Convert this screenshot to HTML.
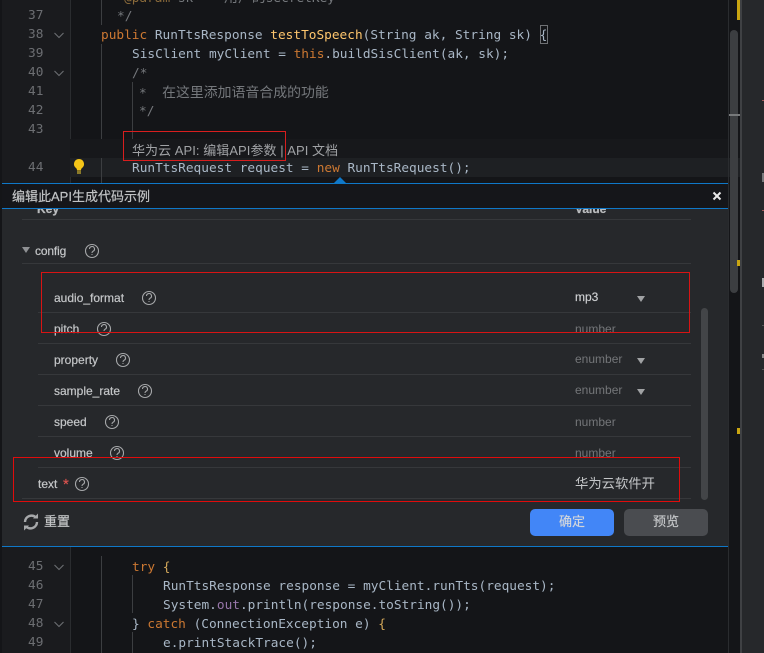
<!DOCTYPE html>
<html><head><meta charset="utf-8">
<style>
html,body{margin:0;padding:0;background:#141518;}
#r{position:relative;width:764px;height:653px;overflow:hidden;background:#141518;}
#r div,#r svg{position:absolute;}
.c{font:12.79px/19px "DejaVu Sans Mono","Noto Sans CJK SC",monospace;color:#a9b7c6;white-space:pre;margin-top:1px;}
.c i{font:13.9px/19px "Noto Sans CJK SC",sans-serif;}
.n{font:12.79px/19px "DejaVu Sans Mono",monospace;color:#6c6e72;white-space:pre;left:28px;}
.k{color:#cc7832}.f{color:#ffc66d}.g{color:#75787c}.w{color:#bfc3c8}.p{color:#9876aa}.y{color:#d4a85a}
.t{font:12px/16px "Liberation Sans","Noto Sans CJK SC",sans-serif;color:#c4c6c8;white-space:pre;-webkit-text-stroke:.2px #c4c6c8;}
.v{font:12px/16px "Liberation Sans","Noto Sans CJK SC",sans-serif;color:#747679;white-space:pre;left:575px;}
.h{height:1px;background:#36383b;}
.ig{width:1px;background:#3c3e41;}
.cj{-webkit-text-stroke:0;}
</style></head><body>
<div id="r">
<div style="left:0;top:0;width:70px;height:653px;background:#1a1b1e"></div>
<div style="left:70px;top:0;width:659px;height:653px;background:#141518"></div>
<div style="left:70px;top:0;width:1px;height:653px;background:#2a2c2f"></div>
<div style="left:70px;top:158px;width:670px;height:19px;background:#1e2023"></div>
<div style="left:0;top:0;width:2px;height:653px;background:#141518"></div>

<div class="ig" style="left:101px;top:0;height:25px"></div>
<div class="ig" style="left:101px;top:44px;height:95px"></div>
<div class="ig" style="left:101px;top:158px;height:25px"></div>
<div class="ig" style="left:132px;top:82px;height:57px"></div>
<div class="ig" style="left:101px;top:556px;height:97px"></div>
<div class="ig" style="left:132px;top:575px;height:38px"></div>
<div class="ig" style="left:132px;top:632px;height:21px"></div>

<div class="c g" style="left:124px;top:-13px"><span style="color:#8a6a3a">@param</span> sk    <i>用户的</i>secretKey</div>
<div class="c g" style="left:117px;top:6px">*/</div>
<div class="n" style="top:6px">37</div>
<div class="n" style="top:25px">38</div>
<div class="n" style="top:44px">39</div>
<div class="n" style="top:63px">40</div>
<div class="n" style="top:82px">41</div>
<div class="n" style="top:101px">42</div>
<div class="n" style="top:120px">43</div>
<div class="n" style="top:158px">44</div>
<div class="n" style="top:557px">45</div>
<div class="n" style="top:576px">46</div>
<div class="n" style="top:595px">47</div>
<div class="n" style="top:614px">48</div>
<div class="n" style="top:633px">49</div>

<svg style="left:52px;top:0;width:16px;height:653px" viewBox="0 0 16 653" fill="none" stroke="#6c6e72" stroke-width="1.1">
<path d="M2.500 33l4.500 4.500 4.500-4.500M2.500 71l4.500 4.500 4.500-4.500M2.500 565l4.500 4.500 4.500-4.500M2.500 622l4.500 4.500 4.500-4.500"/>
</svg>

<div class="c" style="left:101px;top:25px"><span class="k">public</span> RunTtsResponse <span class="f">testToSpeech</span>(String ak, String sk) {</div>
<div style="left:540px;top:25px;width:6px;height:17px;border:1px solid #6f7174"></div>
<div class="c" style="left:132px;top:44px">SisClient myClient = <span class="k">this</span>.buildSisClient(ak, sk);</div>
<div class="c g" style="left:132px;top:63px">/*</div>
<div class="c g" style="left:139px;top:82px">*  <i>在这里添加语音合成的功能</i></div>
<div class="c g" style="left:139px;top:101px">*/</div>
<div style="left:70px;top:139px;width:659px;height:19px;background:#17181b"></div>
<div class="t cj" style="left:132px;top:143px;font-size:13px;color:#a0a2a5;letter-spacing:.05px">华为云 API: 编辑API参数 | API 文档</div>
<div style="left:123px;top:131px;width:161px;height:28px;border:1px solid #d81e1e"></div>
<div class="c" style="left:132px;top:158px">RunTtsRequest request = <span class="k">new</span> RunTtsRequest();</div>
<svg style="left:72px;top:158px;width:14px;height:18px" viewBox="0 0 14 18"><path d="M7 1a5 5 0 0 0-3 9c.7.600 1 1.300 1 2.500h4c0-1.200.3-1.900 1-2.500a5 5 0 0 0-3-9z" fill="#f5c518"/><rect x="5" y="13" width="4" height="3" fill="#8a7a2a"/></svg>

<!-- peek arrow -->
<svg style="left:333px;top:177px;width:14px;height:7px" viewBox="0 0 14 7"><path d="M0 7L6 1 7 0 8 1 14 7z" fill="#0f78c8"/></svg>

<!-- panel -->
<div style="left:2px;top:183px;width:727px;height:363px;background:#26282b"></div>
<div style="left:2px;top:183px;width:727px;height:1px;background:#0f78c8"></div>
<div style="left:2px;top:184px;width:727px;height:24px;background:#15161a"></div>
<div style="left:2px;top:208px;width:727px;height:1px;background:#0f78c8"></div>
<div style="left:2px;top:546px;width:727px;height:1px;background:#0f78c8"></div>
<div class="t" style="left:12px;top:189px;font-size:13px;color:#c0c2c4">编辑此API生成代码示例</div>
<svg style="left:712px;top:191px;width:10px;height:10px" viewBox="0 0 10 10"><path d="M1.500 1.500l7 7M8.500 1.500l-7 7" stroke="#e8e8e8" stroke-width="2"/></svg>

<div style="left:2px;top:209px;width:727px;height:337px;overflow:hidden">
<div class="t" style="left:35px;top:-8px;font-weight:bold;color:#b8babc">Key</div>
<div class="t" style="left:573px;top:-8px;font-weight:bold;color:#b8babc">Value</div>
</div>

<div class="h" style="left:22px;top:219px;width:669px"></div>
<svg style="left:22px;top:247px;width:9px;height:7px" viewBox="0 0 9 7"><path d="M0 0h8L4 6z" fill="#8f9194"/></svg>
<div class="t" style="left:35px;top:243px;letter-spacing:-.15px">config</div>
<div class="h" style="left:22px;top:263px;width:669px"></div>

<div class="t" style="left:54px;top:290px">audio_format</div>
<div class="t" style="left:575px;top:289px;color:#cfd1d3">mp3</div>
<div class="h" style="left:38px;top:312px;width:653px"></div>
<div class="t" style="left:54px;top:321px">pitch</div>
<div class="v" style="top:321px">number</div>
<div class="h" style="left:38px;top:343px;width:653px"></div>
<div class="t" style="left:54px;top:352px">property</div>
<div class="v" style="top:351px">enumber</div>
<div class="h" style="left:38px;top:374px;width:653px"></div>
<div class="t" style="left:54px;top:383px">sample_rate</div>
<div class="v" style="top:382px">enumber</div>
<div class="h" style="left:38px;top:405px;width:653px"></div>
<div class="t" style="left:54px;top:414px">speed</div>
<div class="v" style="top:414px">number</div>
<div class="h" style="left:38px;top:436px;width:653px"></div>
<div class="t" style="left:54px;top:445px">volume</div>
<div class="v" style="top:445px">number</div>
<div class="h" style="left:38px;top:467px;width:653px"></div>
<div class="t" style="left:38px;top:476px">text</div>
<div class="t" style="left:63px;top:477px;font-size:15px;color:#d9534f;-webkit-text-stroke:.2px #d9534f">*</div>
<div class="t cj" style="left:575px;top:476px;font-size:13.33px;color:#c4c6c8">华为云软件开</div>
<div class="h" style="left:22px;top:498px;width:669px"></div>

<svg style="left:0;top:0;width:764px;height:653px" viewBox="0 0 764 653" fill="none">
<g stroke="#a6a8aa" stroke-width="1.100">
<circle cx="92" cy="251" r="6.500"/><circle cx="149" cy="298" r="6.500"/><circle cx="104" cy="329" r="6.500"/><circle cx="123" cy="360" r="6.500"/><circle cx="145" cy="391" r="6.500"/><circle cx="112" cy="422" r="6.500"/><circle cx="117" cy="453" r="6.500"/><circle cx="82" cy="484" r="6.500"/>
<path d="M89.500 249a2.500 2.500 0 1 1 3.500 2.300c-.7.4-1 .9-1 1.700M146.500 296a2.500 2.500 0 1 1 3.500 2.300c-.7.4-1 .9-1 1.700M101.500 327a2.500 2.500 0 1 1 3.500 2.300c-.7.4-1 .9-1 1.700M120.500 358a2.500 2.500 0 1 1 3.500 2.300c-.7.4-1 .9-1 1.700M142.500 389a2.500 2.500 0 1 1 3.500 2.300c-.7.4-1 .9-1 1.700M109.500 420a2.500 2.500 0 1 1 3.500 2.300c-.7.4-1 .9-1 1.700M114.500 451a2.500 2.500 0 1 1 3.500 2.300c-.7.4-1 .9-1 1.700M79.500 482a2.500 2.500 0 1 1 3.500 2.300c-.7.4-1 .9-1 1.700"/>
</g>
<g fill="#a6a8aa"><rect x="91.500" y="254" width="1" height="1"/><rect x="148.500" y="301" width="1" height="1"/><rect x="103.500" y="332" width="1" height="1"/><rect x="122.500" y="363" width="1" height="1"/><rect x="144.500" y="394" width="1" height="1"/><rect x="111.500" y="425" width="1" height="1"/><rect x="116.500" y="456" width="1" height="1"/><rect x="81.500" y="487" width="1" height="1"/></g>
<g fill="#a0a2a4"><path d="M637 296h8l-4 6zM637 358h8l-4 6zM637 389h8l-4 6z"/></g>
<path d="M25 522a6.500 6.500 0 0 1 11-4.500M37 522a6.500 6.500 0 0 1-11 4.500" stroke="#a6a8aa" stroke-width="2.400"/>
<path d="M38 513.500v5h-5zM24 530.500v-5h5z" fill="#a6a8aa"/>
</svg>
<div style="left:41px;top:272px;width:647px;height:59px;border:1px solid #d81414"></div>
<div style="left:13px;top:457px;width:665px;height:43px;border:1px solid #e00c0c"></div>

<div class="t" style="left:44px;top:514px;font-size:13px;color:#c4c6c8">重置</div>
<div class="t" style="left:530px;top:509px;width:84px;height:27px;background:#4286f7;border-radius:5px;text-align:center;line-height:26px;font-size:13px;color:#d6dce6">确定</div>
<div class="t" style="left:624px;top:509px;width:84px;height:27px;background:#4a4c50;border-radius:5px;text-align:center;line-height:26px;font-size:13px;color:#c4c6c8">预览</div>
<div style="left:701px;top:308px;width:7px;height:192px;background:#434548;border-radius:4px"></div>

<div class="c" style="left:132px;top:557px"><span class="k">try</span> <span class="y">{</span></div>
<div class="c" style="left:163px;top:576px">RunTtsResponse response = myClient.runTts(request);</div>
<div class="c" style="left:163px;top:595px">System.<span class="p">out</span>.println(response.toString());</div>
<div class="c" style="left:132px;top:614px">} <span class="k">catch</span> (ConnectionException e) <span class="y">{</span></div>
<div class="c" style="left:163px;top:633px">e.printStackTrace();</div>

<!-- right -->
<div style="left:729px;top:0;width:11px;height:158px;background:#141518"></div>
<div style="left:729px;top:158px;width:11px;height:19px;background:#1e2023"></div>
<div style="left:729px;top:177px;width:11px;height:476px;background:#141518"></div>
<div style="left:728px;top:0;width:1px;height:653px;background:#2a2c2f"></div>
<div style="left:730px;top:30px;width:8px;height:263px;background:#3c3e41;border-radius:4px"></div>
<div style="left:729px;top:114px;width:12px;height:2px;background:#77797b"></div>
<div style="left:737px;top:0;width:3px;height:20px;background:#c9a511"></div>
<div style="left:737px;top:260px;width:3px;height:6px;background:#c9a511"></div>
<div style="left:737px;top:428px;width:3px;height:6px;background:#c9a511"></div>
<div style="left:740px;top:0;width:2px;height:653px;background:#3f4144"></div>
<div style="left:742px;top:0;width:22px;height:653px;background:#26282b"></div>
<div style="left:762px;top:100px;width:2px;height:1px;background:#a05a5a"></div>
<div style="left:762px;top:173px;width:2px;height:9px;background:#77797b"></div>
<div style="left:762px;top:210px;width:2px;height:1px;background:#a05a5a"></div>
<div style="left:762px;top:278px;width:2px;height:9px;background:#aaacae"></div>
<div style="left:762px;top:325px;width:2px;height:1px;background:#555"></div>
<div style="left:762px;top:354px;width:2px;height:4px;background:#888"></div>
<div style="left:762px;top:369px;width:2px;height:1px;background:#555"></div>
</div>
</body></html>
